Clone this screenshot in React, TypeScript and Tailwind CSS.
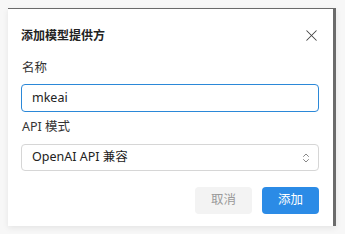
import { X } from "lucide-react";

const font = { fontFamily: '"Noto Sans", "Noto Sans CJK SC", sans-serif' };

export default function App() {
  return (
    <div className="w-[345px] h-[234px] bg-[#f7f7f7] pt-[8px] pl-[8px]" style={font}>
      <div className="w-[328px] h-[218px] bg-white border-t border-[#6a6a6a] border-r-[3px] border-r-[#6b6b6b] shadow-[0_2px_6px_rgba(0,0,0,0.08)] flex flex-col pl-[13px] pr-[14px]">
        <div className="flex items-center justify-between h-[52px] pt-[1px]">
          <span className="text-[12px] font-bold text-[#222] tracking-[0px]">添加模型提供方</span>
          <X size={19} strokeWidth={1.3} className="text-[#444] mr-[-2px]" />
        </div>
        <div className="text-[12.5px] text-[#333] leading-[18px] mt-[-2px] pl-[1px]">名称</div>
        <div className="mt-[7px] h-[28px] rounded-[4px] border border-[#2b88d8] flex items-center px-[10px] text-[12.5px] text-[#222]">
          mkeai
        </div>
        <div className="text-[12.5px] text-[#333] leading-[18px] mt-[6px] pl-[1px]">API 模式</div>
        <div className="mt-[8px] h-[27px] rounded-[4px] border border-[#d6d6d6] flex items-center justify-between pl-[10px] pr-[8px] text-[12.5px] text-[#222]">
          <span>OpenAI API 兼容</span>
          <svg width="8" height="12" viewBox="0 0 8 12" fill="none" stroke="#888" strokeWidth="1" strokeLinecap="round" strokeLinejoin="round">
            <path d="M1.5 4.5 L4 2 L6.5 4.5" />
            <path d="M1.5 7.5 L4 10 L6.5 7.5" />
          </svg>
        </div>
        <div className="flex justify-end gap-[10px] mt-[16px]">
          <button className="w-[57px] h-[27px] rounded-[4px] bg-[#f3f3f3] text-[#9a9a9a] text-[12.5px]">取消</button>
          <button className="w-[57px] h-[27px] rounded-[4px] bg-[#2b8be6] text-white text-[12.5px]">添加</button>
        </div>
      </div>
    </div>
  );
}
